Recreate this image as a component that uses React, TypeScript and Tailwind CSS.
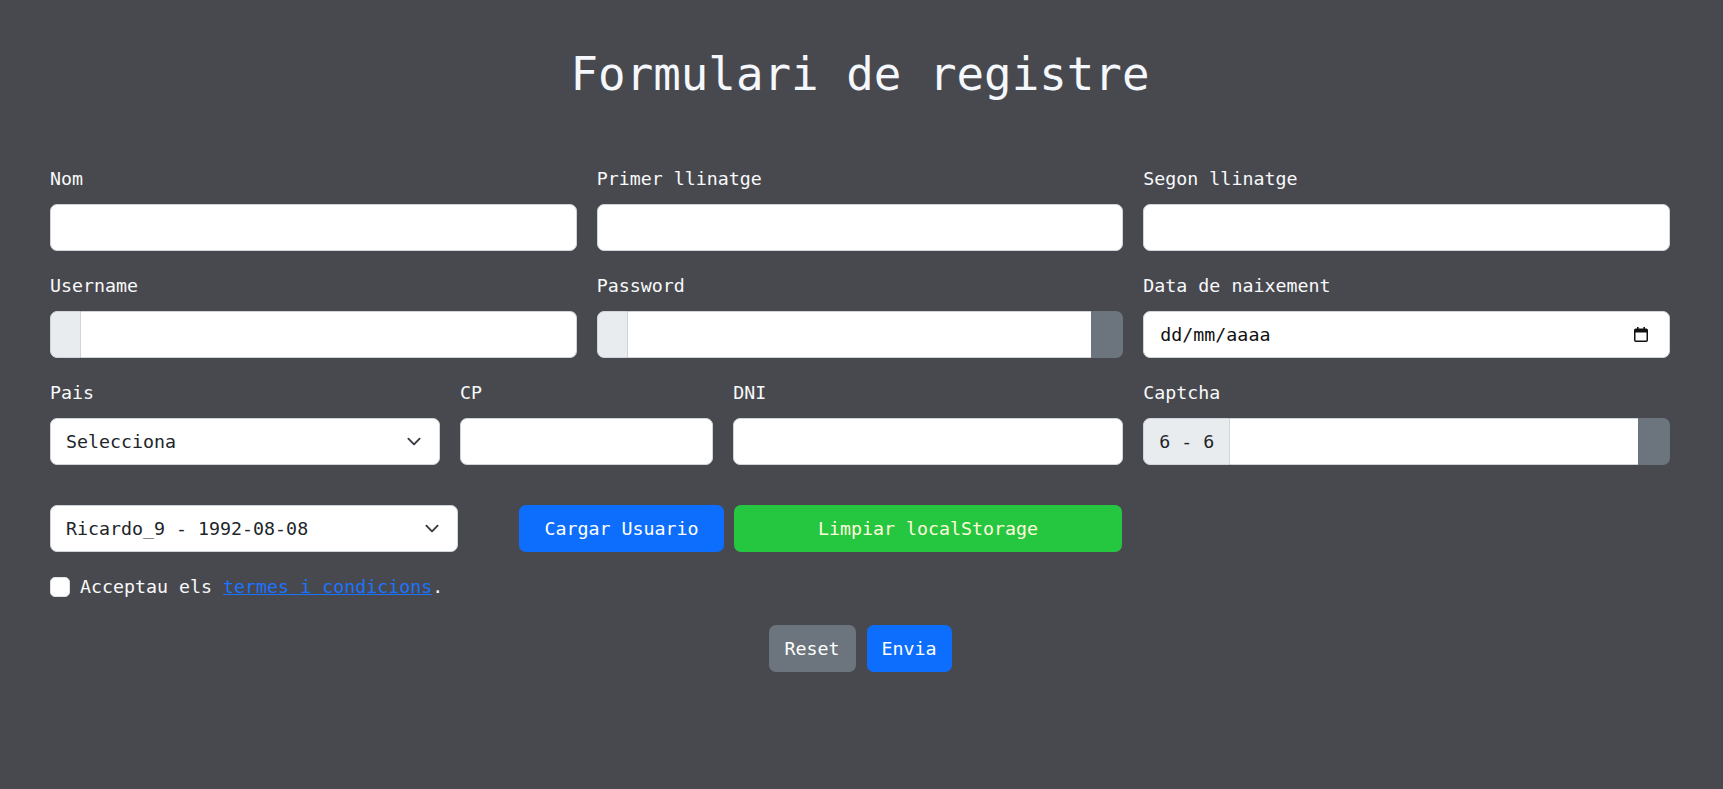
import React from "react";

const FONT = "font-['DejaVu_Sans_Mono','Liberation_Mono',monospace]";

function Label({ children }: { children: React.ReactNode }) {
  return (
    <label className="block h-[30px] leading-[30px] mb-[10px] text-[18.3px] text-[#f8f9fa]">
      {children}
    </label>
  );
}

function TextInput() {
  return (
    <input
      type="text"
      className="block w-full h-[47px] px-[15px] rounded-[7px] border border-[#ced4da] bg-white text-[18.3px] text-[#212529] outline-none"
    />
  );
}

function Chevron() {
  return (
    <svg width="20" height="15" viewBox="0 0 16 16" className="shrink-0" fill="none">
      <path d="m2 5 6 6 6-6" stroke="#343a40" strokeWidth="2" strokeLinecap="round" strokeLinejoin="round" />
    </svg>
  );
}

function FakeSelect({ value, className = "" }: { value: string; className?: string }) {
  return (
    <div
      className={`flex items-center justify-between h-[47px] pl-[15px] pr-[15px] rounded-[7px] border border-[#ced4da] bg-white text-[18.3px] text-[#212529] ${className}`}
    >
      <span>{value}</span>
      <Chevron />
    </div>
  );
}

function CalendarIcon() {
  return (
    <svg width="16" height="17" viewBox="0 0 16 17" fill="none">
      <rect x="1.75" y="3.25" width="12.5" height="12" rx="1" stroke="#111" strokeWidth="1.5" />
      <rect x="2" y="3.5" width="12" height="3" fill="#111" />
      <rect x="4" y="1" width="1.6" height="3" fill="#111" />
      <rect x="10.4" y="1" width="1.6" height="3" fill="#111" />
    </svg>
  );
}

export default function App() {
  return (
    <div className={`min-h-[789px] w-full bg-[#48494f] ${FONT}`}>
      <div className="pl-[50px] pr-[53px] pt-[44px]">
        <h1 className="h-[60px] leading-[60px] text-center text-[45.8px] font-normal text-[#f4f7fb]">
          Formulari de registre
        </h1>

        <form className="mt-[60px]">
          {/* fila 1 */}
          <div className="grid grid-cols-3 gap-x-[20px] mb-[20px]">
            <div>
              <Label>Nom</Label>
              <TextInput />
            </div>
            <div>
              <Label>Primer llinatge</Label>
              <TextInput />
            </div>
            <div>
              <Label>Segon llinatge</Label>
              <TextInput />
            </div>
          </div>

          {/* fila 2 */}
          <div className="grid grid-cols-3 gap-x-[20px] mb-[20px]">
            <div>
              <Label>Username</Label>
              <div className="flex h-[47px]">
                <span className="w-[31px] shrink-0 rounded-l-[7px] border border-[#ced4da] bg-[#e9ecef]" />
                <input
                  type="text"
                  className="flex-1 min-w-0 px-[15px] rounded-r-[7px] border-y border-r border-[#ced4da] bg-white outline-none"
                />
              </div>
            </div>
            <div>
              <Label>Password</Label>
              <div className="flex h-[47px]">
                <span className="w-[31px] shrink-0 rounded-l-[7px] border border-[#ced4da] bg-[#e9ecef]" />
                <input
                  type="password"
                  className="flex-1 min-w-0 px-[15px] border-y border-[#ced4da] bg-white outline-none"
                />
                <button type="button" className="w-[32px] shrink-0 rounded-r-[7px] bg-[#6c757d]" />
              </div>
            </div>
            <div>
              <Label>Data de naixement</Label>
              <div className="flex items-center justify-between h-[47px] pl-[16px] pr-[20px] rounded-[7px] border border-[#ced4da] bg-white text-[18.3px] text-[#111]">
                <span>dd/mm/aaaa</span>
                <CalendarIcon />
              </div>
            </div>
          </div>

          {/* fila 3 */}
          <div className="grid grid-cols-12 gap-x-[20px]">
            <div className="col-span-3">
              <Label>Pais</Label>
              <FakeSelect value="Selecciona" />
            </div>
            <div className="col-span-2">
              <Label>CP</Label>
              <TextInput />
            </div>
            <div className="col-span-3">
              <Label>DNI</Label>
              <TextInput />
            </div>
            <div className="col-span-4">
              <Label>Captcha</Label>
              <div className="flex h-[47px]">
                <span className="flex items-center shrink-0 px-[15px] rounded-l-[7px] border border-[#ced4da] bg-[#e9ecef] text-[18.3px] text-[#212529]">
                  6 - 6
                </span>
                <input
                  type="text"
                  className="flex-1 min-w-0 px-[15px] border-y border-[#ced4da] bg-white outline-none"
                />
                <button type="button" className="w-[32px] shrink-0 rounded-r-[7px] bg-[#6c757d]" />
              </div>
            </div>
          </div>

          {/* usuaris guardats */}
          <div className="flex mt-[40px] h-[47px]">
            <FakeSelect value="Ricardo_9 - 1992-08-08" className="w-[408px]" />
            <button
              type="button"
              className="ml-[61px] w-[205px] rounded-[7px] bg-[#0d6efd] text-[18.3px] text-white"
            >
              Cargar Usuario
            </button>
            <button
              type="button"
              className="ml-[10px] w-[388px] rounded-[7px] bg-[#25c640] text-[18.3px] text-[#fffbdc]"
            >
              Limpiar localStorage
            </button>
          </div>

          {/* termes */}
          <div className="flex items-center gap-[10px] mt-[20px] h-[30px] text-[18.3px] text-[#f8f9fa]">
            <span className="w-[20px] h-[20px] rounded-[5px] border border-[#dee2e6] bg-white" />
            <span>
              Acceptau els{" "}
              <a href="#" className="text-[#1a73ff] underline">
                termes i condicions
              </a>
              .
            </span>
          </div>

          <div className="flex justify-center gap-[11px] mt-[23px]">
            <button type="button" className="h-[47px] w-[87px] rounded-[7px] bg-[#6c757d] text-[18.3px] text-white">
              Reset
            </button>
            <button type="submit" className="h-[47px] w-[85px] rounded-[7px] bg-[#0d6efd] text-[18.3px] text-white">
              Envia
            </button>
          </div>
        </form>
      </div>
    </div>
  );
}
